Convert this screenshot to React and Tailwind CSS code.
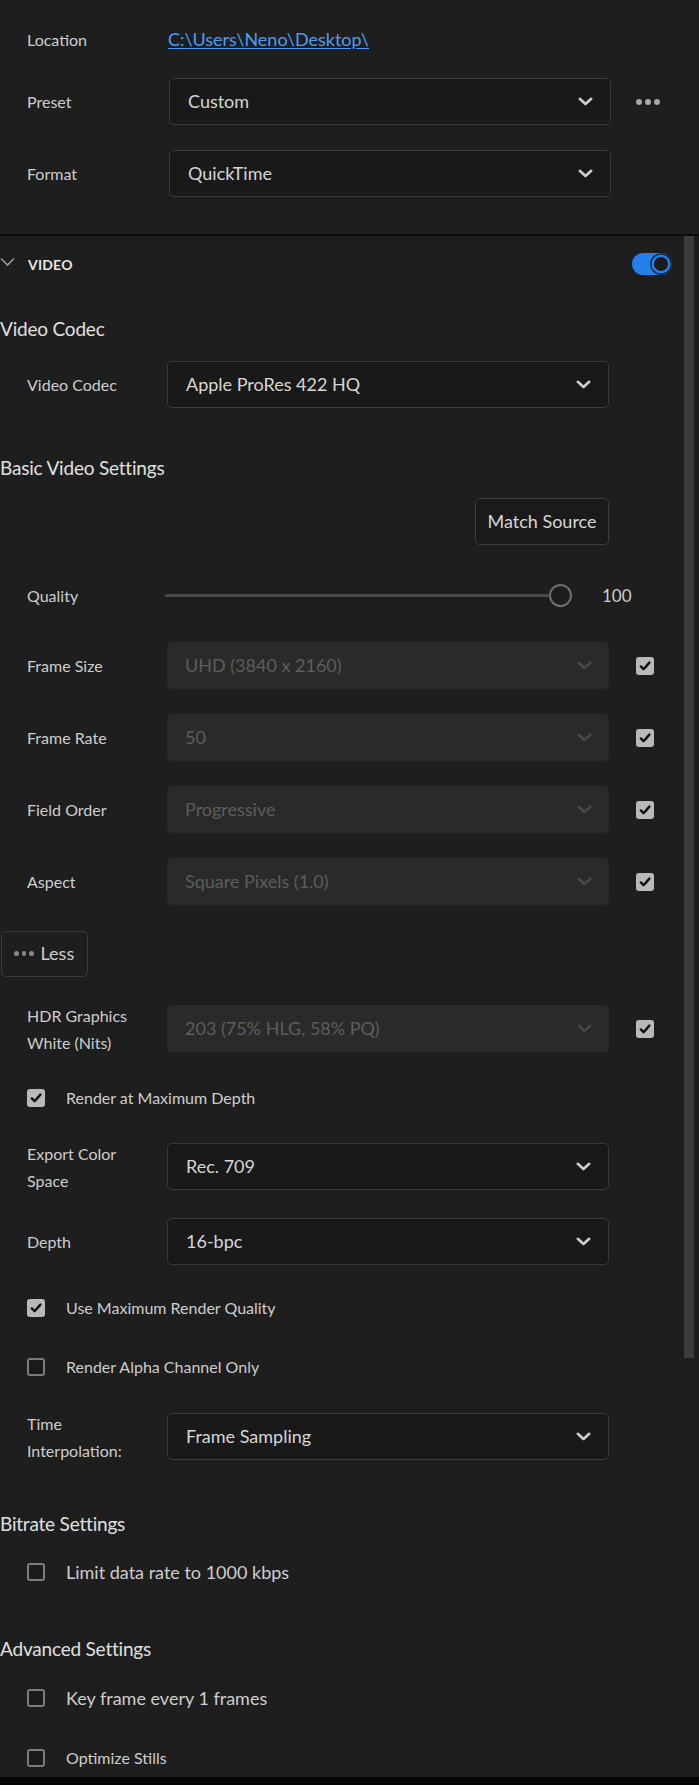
import React from 'react';

const FONT = { fontFamily: 'Lato, "Noto Sans", sans-serif' };

function Chevron({ dim }) {
  return (
    <svg width="15" height="9" viewBox="0 0 15 9" className="shrink-0">
      <path
        d="M1.8 1.8 L7.5 7 L13.2 1.8"
        fill="none"
        stroke={dim ? '#484848' : '#cfcfcf'}
        strokeWidth="2.6"
        strokeLinecap="round"
        strokeLinejoin="round"
      />
    </svg>
  );
}

function Select({ value, disabled }) {
  const base =
    'flex h-[47px] w-[442px] shrink-0 items-center justify-between rounded-[5px] pl-[18px] pr-[17px] text-[18px]';
  return (
    <div
      className={
        disabled
          ? base + ' bg-[#2a2a2a] text-[#5d5d5d]'
          : base + ' border border-[#3a3a3a] bg-[#191919] text-[#d6d6d6]'
      }
    >
      <span>{value}</span>
      <Chevron dim={disabled} />
    </div>
  );
}

function Check({ on }) {
  if (!on) {
    return <div className="h-[18px] w-[18px] shrink-0 rounded-[3px] border-2 border-[#7c7c7c] bg-[#1a1a1a]" />;
  }
  return (
    <div className="flex h-[18px] w-[18px] shrink-0 items-center justify-center rounded-[3px] bg-[#b9b9b9]">
      <svg width="14" height="14" viewBox="0 0 14 14">
        <path d="M2.8 7.4 L5.6 10.2 L11.4 3.6" fill="none" stroke="#101010" strokeWidth="2.4" strokeLinecap="round" strokeLinejoin="round" />
      </svg>
    </div>
  );
}

function Dots({ size = 6, gap = 3, color = '#a9a9a9' }) {
  return (
    <div className="flex items-center" style={{ gap }}>
      {[0, 1, 2].map((i) => (
        <span key={i} className="block rounded-full" style={{ width: size, height: size, background: color }} />
      ))}
    </div>
  );
}

function Label({ children, w = 'w-[167px]' }) {
  return <div className={w + ' shrink-0 pl-[27px] text-[16px] leading-[27px] text-[#cdcdcd]'}>{children}</div>;
}

function SelectRow({ label, value, disabled, check, className }) {
  return (
    <div className={'flex h-[47px] items-center ' + className}>
      <Label>{label}</Label>
      <Select value={value} disabled={disabled} />
      {check && (
        <div className="ml-[27px]">
          <Check on />
        </div>
      )}
    </div>
  );
}

function CheckRow({ label, on, size = 'text-[16px]', className }) {
  return (
    <div className={'flex h-[30px] items-center pl-[27px] ' + className}>
      <Check on={on} />
      <span className={'ml-[21px] text-[#cdcdcd] ' + size}>{label}</span>
    </div>
  );
}

function Heading({ children, className }) {
  return (
    <div className={'flex h-[30px] items-center text-[19px] tracking-[-0.2px] text-[#e0e0e0] ' + className}>
      {children}
    </div>
  );
}

export default function App() {
  return (
    <div className="flex h-[1785px] w-[699px] flex-col overflow-hidden bg-[#1e1e1e]" style={FONT}>
      {/* output section */}
      <div className="flex h-[234px] shrink-0 flex-col pt-[16px]">
        <div className="flex h-[46px] items-center">
          <Label w="w-[168px]">Location</Label>
          <span className="text-[18px] text-[#4b9cf5] underline underline-offset-2">C:\Users\Neno\Desktop\</span>
        </div>
        <div className="mt-[16px] flex h-[47px] items-center">
          <Label w="w-[169px]">Preset</Label>
          <Select value="Custom" />
          <div className="ml-[25px]">
            <Dots />
          </div>
        </div>
        <div className="mt-[25px] flex h-[47px] items-center">
          <Label w="w-[169px]">Format</Label>
          <Select value="QuickTime" />
        </div>
      </div>
      <div className="h-[2px] shrink-0 bg-[#0c0c0c]" />

      {/* video section */}
      <div className="flex h-[1541px] shrink-0">
        <div className="flex w-[684px] shrink-0 flex-col">
          <div className="flex h-[56px] items-center">
            <svg width="16" height="10" viewBox="0 0 16 10" className="shrink-0 -mt-[4px]">
              <path d="M1 1.5 L7.5 8 L14 1.5" fill="none" stroke="#9a9a9a" strokeWidth="1.6" />
            </svg>
            <span className="ml-[12px] text-[14px] font-bold tracking-[0.2px] text-[#e6e6e6]">VIDEO</span>
            <div className="ml-auto mr-[12px]">
              <svg width="40" height="22" viewBox="0 0 40 22">
                <rect x="0" y="0" width="40" height="22" rx="11" fill="#2680eb" />
                <circle cx="29" cy="11" r="10.2" fill="none" stroke="#0e1a2c" strokeWidth="1.2" />
                <circle cx="29" cy="11" r="8" fill="#1b1b1b" stroke="#2680eb" strokeWidth="1.8" />
              </svg>
            </div>
          </div>

          <Heading className="mt-[22px]">Video Codec</Heading>
          <SelectRow className="mt-[17px]" label="Video Codec" value="Apple ProRes 422 HQ" />

          <Heading className="mt-[45px]">Basic Video Settings</Heading>
          <div className="mt-[15px] flex h-[47px] items-center">
            <button className="ml-[475px] h-[47px] w-[134px] rounded-[5px] border border-[#3d3d3d] bg-[#1a1a1a] text-[18px] text-[#d6d6d6]">
              Match Source
            </button>
          </div>

          <div className="mt-[27px] flex h-[47px] items-center">
            <Label w="w-[165px]">Quality</Label>
            <div className="h-[3px] w-[384px] rounded-full bg-[#4a4a4a]" />
            <div className="h-[23px] w-[23px] shrink-0 rounded-full border-2 border-[#6d6d6d] bg-[#1e1e1e]" />
            <span className="ml-[30px] text-[17px] text-[#cdcdcd]">100</span>
          </div>

          <SelectRow className="mt-[23px]" label="Frame Size" value="UHD (3840 x 2160)" disabled check />
          <SelectRow className="mt-[25px]" label="Frame Rate" value="50" disabled check />
          <SelectRow className="mt-[25px]" label="Field Order" value="Progressive" disabled check />
          <SelectRow className="mt-[25px]" label="Aspect" value="Square Pixels (1.0)" disabled check />

          <div className="mt-[25px] flex h-[47px] items-center">
            <button className="ml-[1px] flex h-[46px] w-[87px] items-center rounded-[5px] border border-[#3b3b3b] pl-[12px]">
              <Dots size={4.5} gap={3} color="#8a8a8a" />
              <span className="ml-[7px] text-[18px] text-[#cdcdcd]">Less</span>
            </button>
          </div>

          <SelectRow
            className="mt-[28px]"
            label={
              <>
                HDR Graphics
                <br />
                White (Nits)
              </>
            }
            value="203 (75% HLG, 58% PQ)"
            disabled
            check
          />
          <CheckRow className="mt-[31px]" on label="Render at Maximum Depth" />
          <SelectRow
            className="mt-[30px]"
            label={
              <>
                Export Color
                <br />
                Space
              </>
            }
            value="Rec. 709"
          />
          <SelectRow className="mt-[28px]" label="Depth" value="16-bpc" />
          <CheckRow className="mt-[28px]" on label="Use Maximum Render Quality" />
          <CheckRow className="mt-[29px]" label="Render Alpha Channel Only" />
          <SelectRow
            className="mt-[31px]"
            label={
              <>
                Time
                <br />
                Interpolation:
              </>
            }
            value="Frame Sampling"
          />

          <Heading className="mt-[49px]">Bitrate Settings</Heading>
          <CheckRow className="mt-[18px]" size="text-[18px]" label="Limit data rate to 1000 kbps" />

          <Heading className="mt-[47px]">Advanced Settings</Heading>
          <CheckRow className="mt-[19px]" size="text-[18px]" label="Key frame every 1 frames" />
          <CheckRow className="mt-[30px]" label="Optimize Stills" />
        </div>
        <div className="w-[15px] shrink-0">
          <div className="h-[1122px] w-[10px] bg-[#3c3c3c]" />
        </div>
      </div>
      <div className="flex-1 bg-[#050505]" />
    </div>
  );
}
